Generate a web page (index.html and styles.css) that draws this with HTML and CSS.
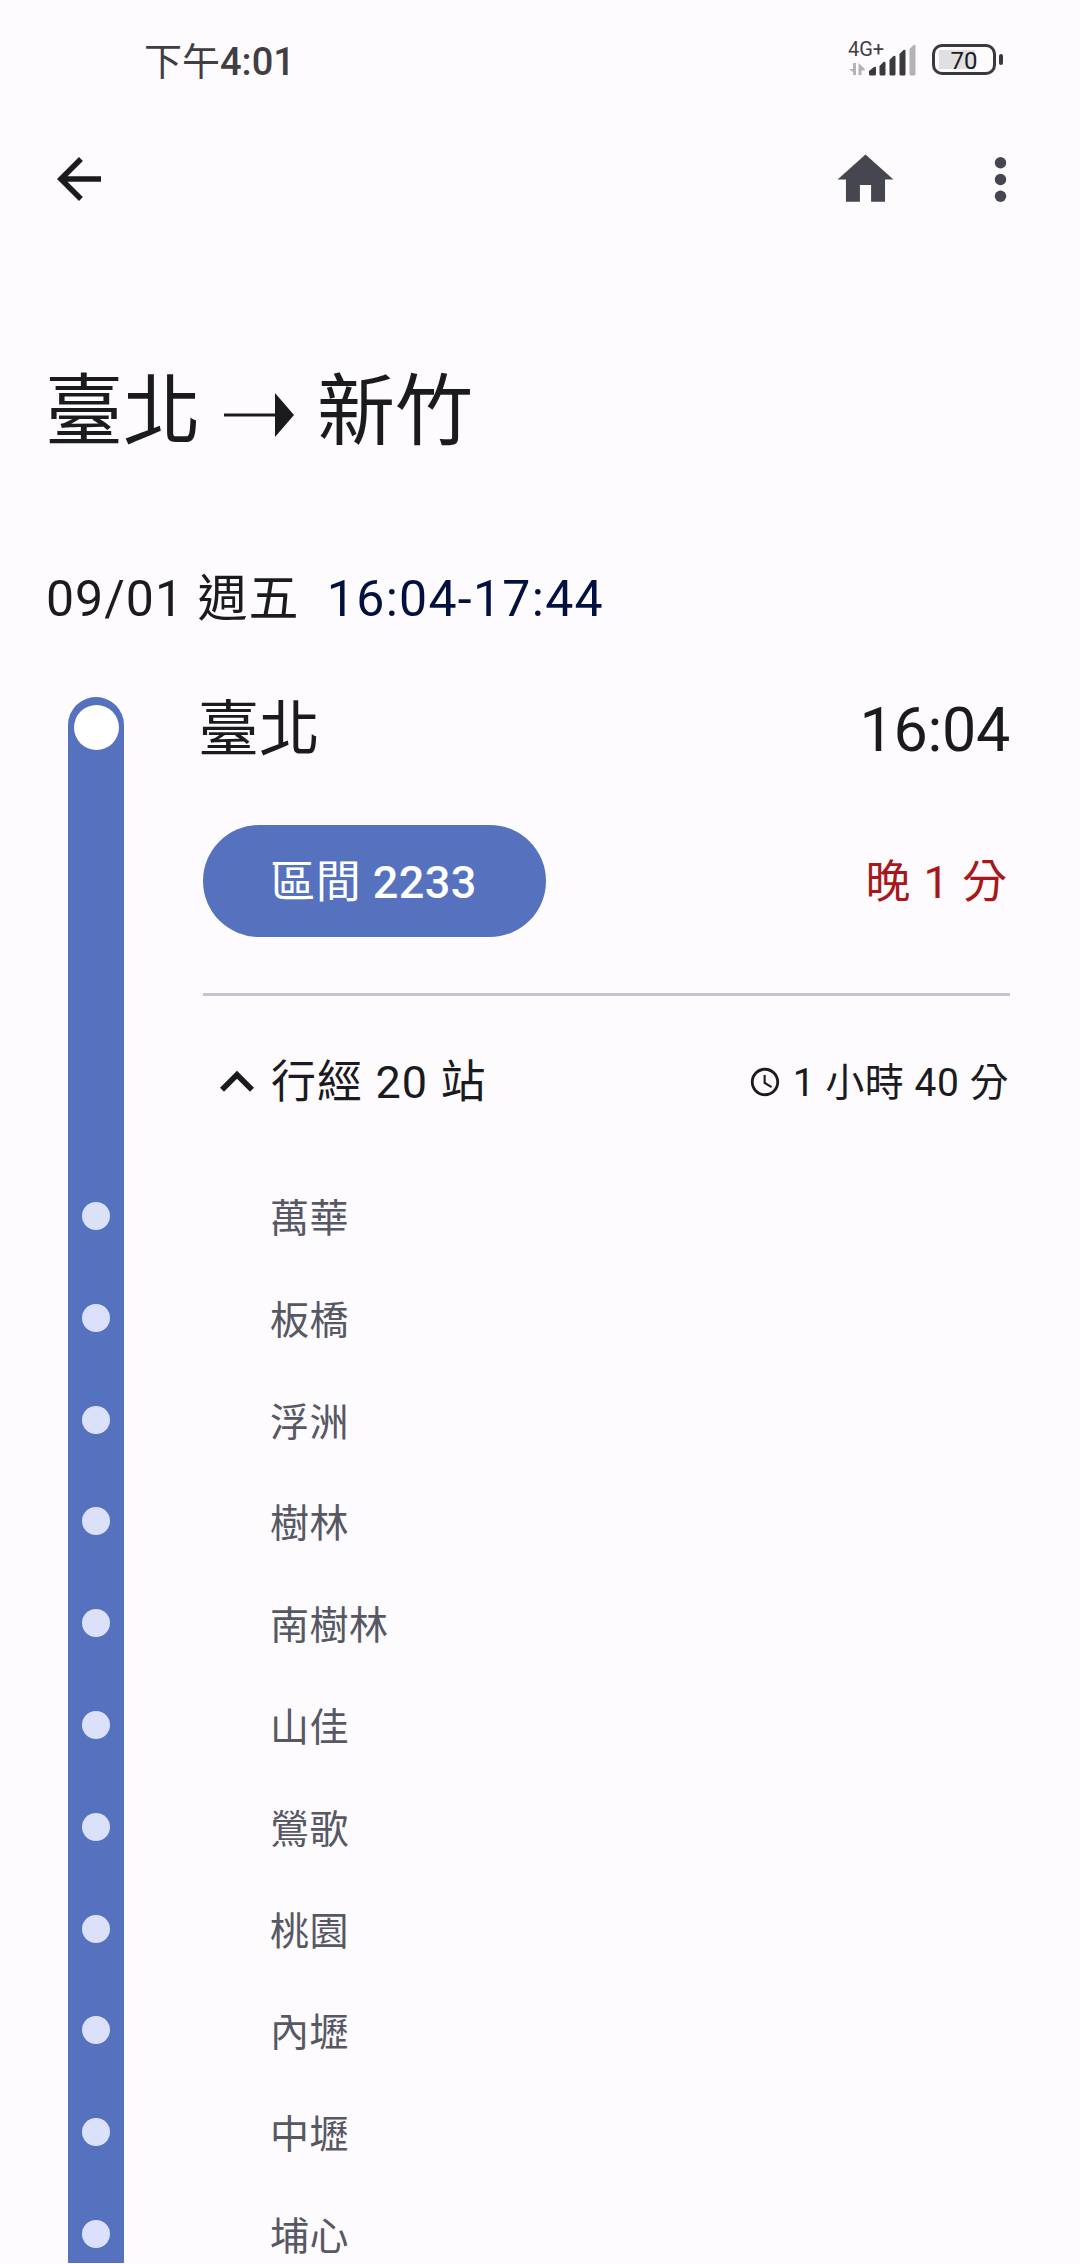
FILE: index.html
```html
<!DOCTYPE html>
<html lang="zh-Hant">
<head>
  <meta charset="UTF-8" />
  <meta name="viewport" content="width=device-width, initial-scale=1.0"/>
  <title>臺北 → 新竹</title>
  <link rel="stylesheet" href="styles.css">
</head>
<body>

  <div class="status-bar">
    <div class="clock"><span class="regular">下午</span>4:01</div>
    <div class="status-icons">
      <div class="network">
        <span class="network-type">4G+</span>
        <svg class="signal" width="68" height="34" viewBox="0 0 68 34">
          <g fill="#b3b2b6">
            <path d="M4 20h3v12H4v-3L0 26h4zM9.500 20l6 5.500v2h-3V32h-3z"/>
          </g>
          <g fill="#3a393c">
            <path d="M20 28l5-4q2-1 2 1v6q0 1.500-1.500 1.500h-4q-1.500 0-1.500-1.500z"/>
            <path d="M30.500 23l4-4q2-1 2 1v11q0 1.500-1.500 1.500h-3q-1.500 0-1.500-1.500z"/>
            <path d="M40.500 17l4-4q2-1 2 1v17q0 1.500-1.500 1.500h-3q-1.500 0-1.500-1.500z"/>
            <path d="M50.500 11l4-4q2-1 2 1v23q0 1.500-1.500 1.500h-3q-1.500 0-1.500-1.500z"/>
          </g>
          <path fill="#b3b2b6" d="M60.500 6l4-4q2-1 2 1v28q0 1.500-1.500 1.500h-3q-1.500 0-1.500-1.500z"/>
        </svg>
      </div>
      <div class="battery">
        <span class="battery-level">70</span>
      </div>
    </div>
  </div>

  <div class="app-bar">
    <svg class="icon-back" width="66" height="66" viewBox="0 0 24 24" fill="#1b1b1f"><path d="M20 11H7.83l5.59-5.59L12 4l-8 8 8 8 1.41-1.41L7.83 13H20z"/></svg>
    <svg class="icon-home" width="67" height="67" viewBox="0 0 24 24" fill="#45464f"><path d="M10 20v-6h4v6h5v-8h3L12 3 2 12h3v8z"/></svg>
    <svg class="icon-more" width="67" height="67" viewBox="0 0 24 24" fill="#45464f"><circle cx="12" cy="6" r="2.05"/><circle cx="12" cy="12" r="2.05"/><circle cx="12" cy="18" r="2.05"/></svg>
  </div>

  <h1 class="title">
    <span>臺北</span>
    <svg class="arrow" width="70" height="46" viewBox="0 0 70 46" fill="#1b1b1f"><path d="M0 21.500h51V1l19 22-19 22V24.500H0z"/></svg>
    <span>新竹</span>
  </h1>

  <div class="date">09/01 週五 <span class="time-range">16:04-17:44</span></div>

  <div class="trip">
    <div class="line">
      <span class="start-dot"></span>
      <div class="line-dots" id="lineDots"></div>
    </div>

    <div class="details">
      <div class="origin">
        <span>臺北</span>
        <span class="origin-time">16:04</span>
      </div>

      <div class="train">
        <div class="train-token"><span class="regular">區間</span> 2233</div>
        <span class="delay">晚 1 分</span>
      </div>

      <div class="summary">
        <svg class="icon-chevron" width="68" height="68" viewBox="0 0 24 24" fill="#1b1b1f"><path d="M12 8l-6 6 1.410 1.410L12 10.830l4.590 4.580L18 14z"/></svg>
        <span class="stop-count">行經 20 站</span>
        <svg class="icon-clock" width="34" height="34" viewBox="0 0 24 24" fill="#1b1b1f"><path d="M11.990 2C6.470 2 2 6.480 2 12s4.470 10 9.990 10C17.520 22 22 17.520 22 12S17.520 2 11.990 2zM12 20c-4.420 0-8-3.580-8-8s3.580-8 8-8 8 3.580 8 8-3.580 8-8 8zM12.500 7H11v6l5.250 3.150.750-1.230-4.500-2.670z"/></svg>
        <span class="duration">1 小時 40 分</span>
      </div>

      <div class="stop-list">
        <div class="stop">萬華</div>
        <div class="stop">板橋</div>
        <div class="stop">浮洲</div>
        <div class="stop">樹林</div>
        <div class="stop">南樹林</div>
        <div class="stop">山佳</div>
        <div class="stop">鶯歌</div>
        <div class="stop">桃園</div>
        <div class="stop">內壢</div>
        <div class="stop">中壢</div>
        <div class="stop">埔心</div>
      </div>
    </div>
  </div>

  <script>
    // one dot on the line for every stop
    const lineDots = document.getElementById('lineDots');
    document.querySelectorAll('.stop').forEach(() => {
      const dot = document.createElement('span');
      dot.className = 'stop-dot';
      lineDots.appendChild(dot);
    });
  </script>

</body>
</html>
```
FILE: styles.css
```css
* {
  box-sizing: border-box;
}

body {
  font-family: Roboto, "Noto Sans CJK TC", sans-serif;
  background: #fefbff;
  color: #1b1b1f;
  margin: 0;
  height: 2264px;
  overflow: hidden;
}

svg {
  display: block;
  flex: none;
}

.regular {
  font-weight: 400;
}

.status-bar {
  height: 120px;
  padding: 0 76px 0 144px;
  display: flex;
  justify-content: space-between;
}

.clock {
  font-size: 38px;
  font-weight: 500;
  line-height: 60px;
  padding-top: 32px;
  color: #3f3e41;
}

.status-icons {
  display: flex;
  gap: 15px;
  padding-top: 40px;
}

.network {
  position: relative;
  width: 68px;
  height: 36px;
}

.signal {
  margin-top: 3px;
}

.network-type {
  position: absolute;
  left: -1px;
  top: -1px;
  font-size: 20px;
  line-height: 20px;
  color: #3f3e41;
}

.battery {
  position: relative;
  width: 64px;
  height: 31px;
  margin-top: 4px;
  border: 3px solid #3a393c;
  border-radius: 10px;
  background: linear-gradient(#e0dfe2, #e0dfe2) 4px 3px / 36px 19px no-repeat;
  text-align: center;
  margin-right: 8px;
}

.battery::after {
  content: "";
  position: absolute;
  right: -10px;
  top: 7px;
  width: 4px;
  height: 11px;
  border-radius: 2px;
  background: #3a393c;
}

.battery-level {
  display: block;
  font-size: 24px;
  line-height: 28px;
}

.app-bar {
  height: 120px;
  padding: 26px 46px 0 46px;
  display: flex;
}

.icon-home {
  margin-left: auto;
}

.icon-more {
  margin-left: 68px;
}

.title {
  margin: 0;
  padding: 115px 0 0 45px;
  height: 302px;
  font-size: 78px;
  font-weight: 400;
  line-height: 116px;
  white-space: nowrap;
  display: flex;
}

.arrow {
  margin: 37px 23px 0 23px;
}

.date {
  height: 155px;
  padding: 21px 0 0 46px;
  font-size: 50px;
  line-height: 72px;
  letter-spacing: 1px;
}

.time-range {
  color: #00113f;
  margin-left: 14px;
  letter-spacing: 1.3px;
}

.trip {
  display: flex;
  padding: 0 70px 0 68px;
}

.line {
  width: 56px;
  height: 1566px;
  background: #5672be;
  border-radius: 28px 28px 0 0;
  padding-top: 8px;
  display: flex;
  flex-direction: column;
  align-items: center;
}

.start-dot {
  width: 45px;
  height: 45px;
  border-radius: 50%;
  background: #fff;
  flex: none;
}

.line-dots {
  margin-top: 452px;
  display: flex;
  flex-direction: column;
  gap: 73.8px;
}

.stop-dot {
  width: 28px;
  height: 28px;
  border-radius: 50%;
  background: #dce1fb;
}

.details {
  flex: 1;
  padding-left: 79px;
}

.origin {
  display: flex;
  justify-content: space-between;
  height: 128px;
  font-size: 61px;
  line-height: 67px;
  margin-left: -5px;
}

.origin-time {
  letter-spacing: -0.3px;
}

.train {
  display: flex;
  justify-content: space-between;
  align-items: center;
  height: 171px;
  padding-bottom: 56px;
  border-bottom: 3px solid #c4c5ce;
}

.train-token {
  background: #5672be;
  color: white;
  width: 343px;
  height: 112px;
  line-height: 116px;
  border-radius: 56px;
  text-align: center;
  font-size: 45px;
  font-weight: 500;
  letter-spacing: 0.4px;
  padding-right: 2px;
}

.delay {
  color: #a8181b;
  font-size: 45px;
  letter-spacing: 1px;
  padding: 0 2px 5px 0;
}

.summary {
  display: flex;
  align-items: center;
  height: 171px;
}

.stop-count {
  font-size: 45px;
  letter-spacing: 1.1px;
  padding-bottom: 6px;
}

.icon-clock {
  margin-left: auto;
  margin-right: 11px;
}

.duration {
  font-size: 39px;
  letter-spacing: 0.5px;
  padding: 0 1px 5px 0;
}

.stop {
  height: 101.8px;
  line-height: 104px;
  padding-left: 67px;
  font-size: 39px;
  letter-spacing: 0.5px;
  color: #565863;
}
```
